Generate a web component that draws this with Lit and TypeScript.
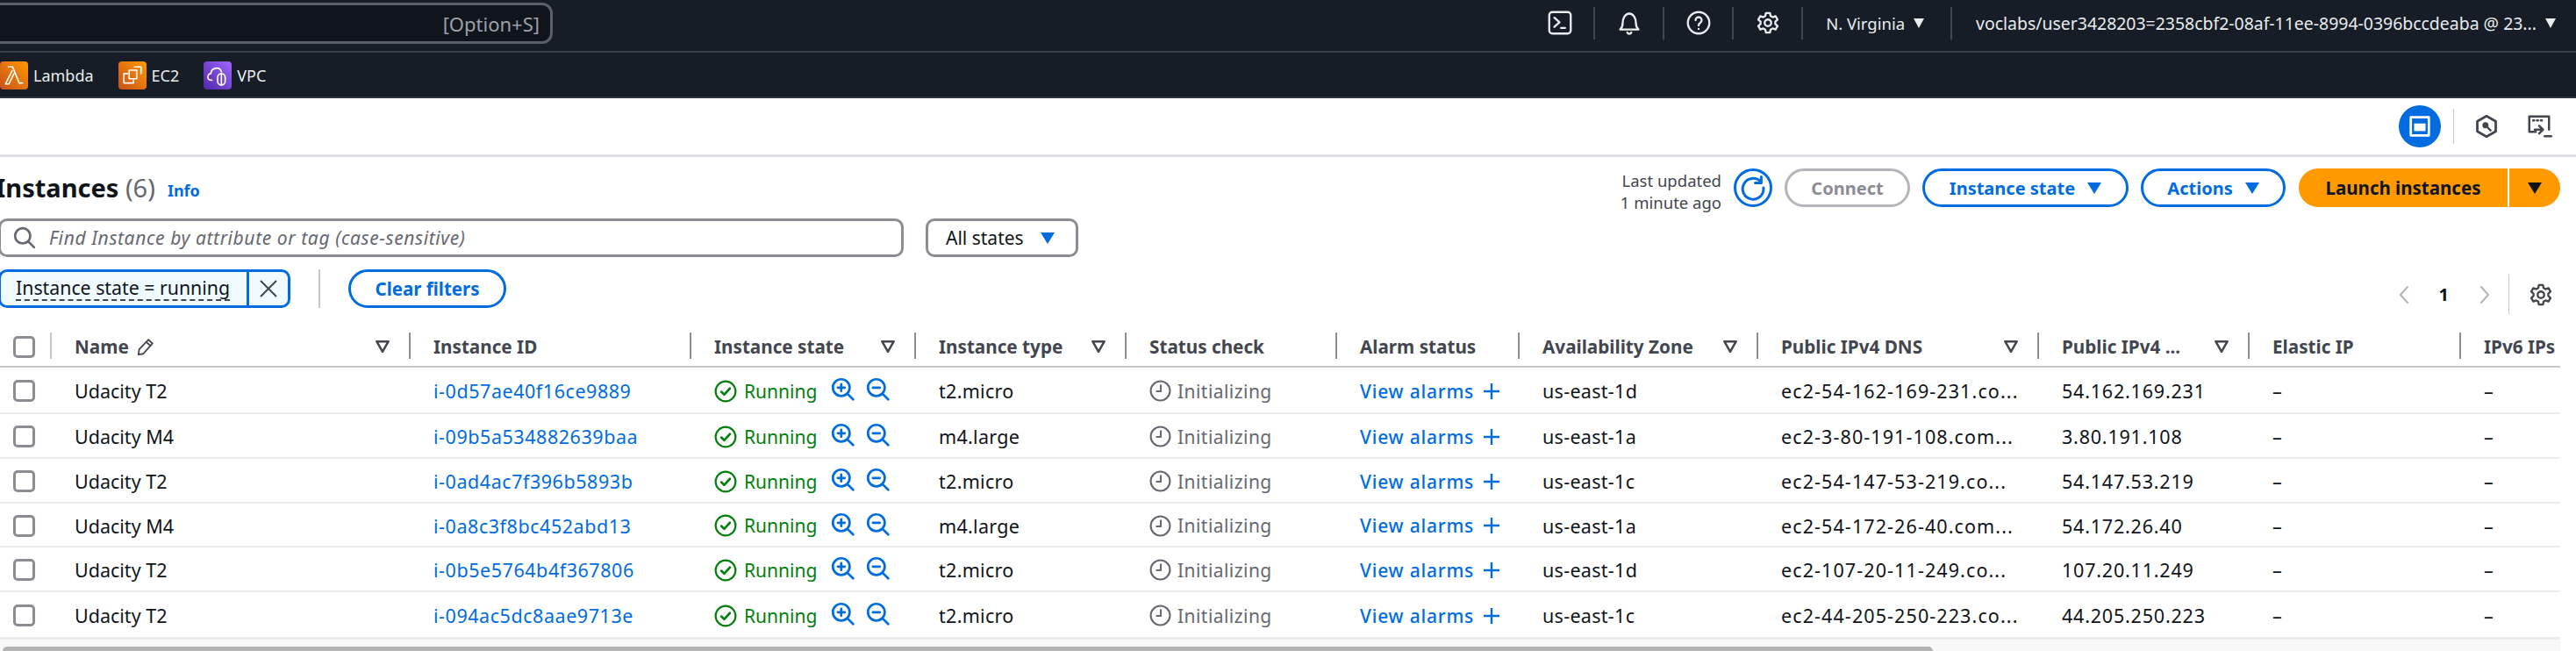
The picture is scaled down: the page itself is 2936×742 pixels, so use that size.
import { LitElement, css, html, svg } from "lit";
import { customElement } from "lit/decorators.js";

type Row = { name: string; id: string; type: string; az: string; dns: string; ip: string };

const rows: Row[] = [
  { name: "Udacity T2", id: "i-0d57ae40f16ce9889", type: "t2.micro", az: "us-east-1d", dns: "ec2-54-162-169-231.co...", ip: "54.162.169.231" },
  { name: "Udacity M4", id: "i-09b5a534882639baa", type: "m4.large", az: "us-east-1a", dns: "ec2-3-80-191-108.com...", ip: "3.80.191.108" },
  { name: "Udacity T2", id: "i-0ad4ac7f396b5893b", type: "t2.micro", az: "us-east-1c", dns: "ec2-54-147-53-219.co...", ip: "54.147.53.219" },
  { name: "Udacity M4", id: "i-0a8c3f8bc452abd13", type: "m4.large", az: "us-east-1a", dns: "ec2-54-172-26-40.com...", ip: "54.172.26.40" },
  { name: "Udacity T2", id: "i-0b5e5764b4f367806", type: "t2.micro", az: "us-east-1d", dns: "ec2-107-20-11-249.co...", ip: "107.20.11.249" },
  { name: "Udacity T2", id: "i-094ac5dc8aae9713e", type: "t2.micro", az: "us-east-1c", dns: "ec2-44-205-250-223.co...", ip: "44.205.250.223" },
];

const columns = [
  { label: "Name", filter: true, edit: true },
  { label: "Instance ID" },
  { label: "Instance state", filter: true },
  { label: "Instance type", filter: true },
  { label: "Status check" },
  { label: "Alarm status" },
  { label: "Availability Zone", filter: true },
  { label: "Public IPv4 DNS", filter: true },
  { label: "Public IPv4 ...", filter: true },
  { label: "Elastic IP" },
  { label: "IPv6 IPs" },
];

const icon = (size: number, body: unknown, box = 24) =>
  html`<svg class="icon" width=${size} height=${size} viewBox="0 0 ${box} ${box}" fill="none" stroke="currentColor" stroke-width="2" stroke-linecap="round" stroke-linejoin="round">${body}</svg>`;

const gearPath = svg`<path d="M10 2.500h4l.6 2.900 2 1.100 2.800-1 2 3.400-2.200 2v2.200l2.200 2-2 3.400-2.800-1-2 1.100-.6 2.900h-4l-.6-2.900-2-1.100-2.800 1-2-3.400 2.200-2v-2.200l-2.200-2 2-3.400 2.800 1 2-1.100z"/><circle cx="12" cy="12" r="3.200"/>`;

const caret = (cls = "") => html`<span class="caret ${cls}"></span>`;

@customElement("app-root")
export class AppRoot extends LitElement {
  static styles = css`
    :host {
      display: block;
      width: 2936px;
      height: 742px;
      overflow: hidden;
      background: #fff;
      font-family: "Noto Sans", "Open Sans", sans-serif;
      font-size: 20px;
      color: #0f141a;
      position: relative;
    }
    * { box-sizing: border-box; }
    .icon { display: block; flex: none; }

    .topbar {
      height: 60px;
      background: #161d26;
      border-bottom: 2px solid #3a4048;
      display: flex;
      align-items: center;
      color: #e9ebed;
    }
    .search {
      width: 650px;
      height: 47px;
      margin-left: -20px;
      margin-top: -5px;
      background: #10141b;
      border: 3px solid #5b5f68;
      border-radius: 12px;
      display: flex;
      align-items: center;
      justify-content: flex-end;
      padding-right: 12px;
      color: #9ba1aa;
      font-size: 22px;
    }
    .top-right {
      margin-left: auto;
      display: flex;
      align-items: center;
      height: 37px;
      margin-top: -6px;
    }
    .top-btn {
      width: 79px;
      height: 37px;
      display: flex;
      align-items: center;
      justify-content: center;
      border-right: 2px solid #414750;
    }
    .region {
      display: flex;
      align-items: center;
      gap: 10px;
      height: 37px;
      padding: 0 30px 0 26px;
      border-right: 2px solid #414750;
      font-size: 18.500px;
      white-space: nowrap;
    }
    .user {
      display: flex;
      align-items: center;
      gap: 10px;
      padding: 0 23px 0 27px;
      font-size: 19.450px;
      white-space: nowrap;
    }
    .top-caret {
      width: 0;
      height: 0;
      border-left: 6px solid transparent;
      border-right: 6px solid transparent;
      border-top: 11px solid #e9ebed;
      flex: none;
    }

    .favbar {
      height: 52px;
      padding-top: 1px;
      background: #161d26;
      border-bottom: 2px solid #2c3038;
      display: flex;
      align-items: center;
      color: #e9ebed;
      font-size: 18px;
      gap: 28px;
    }
    .fav { display: flex; align-items: center; gap: 6px; }
    .tile {
      width: 32px;
      height: 32px;
      border-radius: 4px;
      display: flex;
      align-items: center;
      justify-content: center;
      color: #fff;
    }
    .tile.orange { background: linear-gradient(45deg, #c8511b, #ff9900); }
    .tile.purple { background: linear-gradient(45deg, #4d27a8, #a166ff); }

    .toolbar {
      height: 67px;
      border-bottom: 3px solid #dedee3;
      display: flex;
      align-items: center;
      justify-content: flex-end;
      padding-right: 27px;
      color: #424650;
    }
    .tool-active {
      width: 48px;
      height: 48px;
      border-radius: 50%;
      background: #006ce0;
      display: flex;
      align-items: center;
      justify-content: center;
      color: #fff;
    }
    .tool-sep { width: 1px; height: 40px; background: #c6c6cd; margin: 0 23px 0 14px; }
    .tool-gap { width: 31px; }

    .head {
      height: 44px;
      margin-top: 13px;
      padding-right: 18px;
      display: flex;
      align-items: center;
      margin-left: -5px;
    }
    h1 {
      margin: 0;
      font-size: 29px;
      font-weight: 700;
      line-height: 44px;
      white-space: nowrap;
    }
    h1 span { font-weight: 400; color: #656871; }
    .info { color: #006ce0; font-size: 18px; font-weight: 700; margin-left: 14px; margin-top: 6px; }
    .updated {
      margin-left: auto;
      text-align: right;
      font-size: 18.500px;
      line-height: 25px;
      color: #424650;
      margin-right: 14px;
      margin-top: 8px;
    }
    .head .btn + .btn { margin-left: 14px; }
    .btn {
      height: 44px;
      border: 3px solid #006ce0;
      border-radius: 22px;
      background: #fff;
      color: #006ce0;
      font: 700 20px "Noto Sans", sans-serif;
      display: flex;
      align-items: center;
      justify-content: center;
      gap: 14px;
      white-space: nowrap;
    }
    .btn.round { width: 44px; padding: 0; }
    .btn.off { border-color: #b4b4bb; color: #8c8c94; width: 143px; }
    .btn.state { width: 235px; }
    .btn.actions { width: 165px; }
    .launch { display: flex; margin-left: 15px; gap: 2px; }
    .launch div {
      height: 44px;
      background: #ff9900;
      font-weight: 700;
      display: flex;
      align-items: center;
      justify-content: center;
    }
    .launch .main { width: 238px; border-radius: 22px 0 0 22px; font-size: 20.500px; }
    .launch .more { width: 58px; border-radius: 0 22px 22px 0; }
    .caret {
      width: 0;
      height: 0;
      border-left: 8px solid transparent;
      border-right: 8px solid transparent;
      border-top: 13px solid #006ce0;
      flex: none;
    }
    .caret.dark { border-top-color: #0f141a; }

    .filters { display: flex; height: 44px; margin-top: 13px; gap: 25px; font-size: 21px; }
    .find {
      width: 1032px;
      margin-left: -2px;
      border: 3px solid #8c8c94;
      border-radius: 10px;
      display: flex;
      align-items: center;
      gap: 15px;
      padding-left: 14px;
      color: #656871;
      font-style: italic;
      letter-spacing: 0.6px;
    }
    .select {
      width: 174px;
      border: 3px solid #8c8c94;
      border-radius: 10px;
      display: flex;
      align-items: center;
      justify-content: space-between;
      padding: 0 24px 0 20px;
    }

    .tokens { display: flex; align-items: center; height: 44px; margin-top: 14px; font-size: 21.300px; }
    .token {
      display: flex;
      width: 333px;
      height: 44px;
      margin-left: -2px;
      border: 3px solid #006ce0;
      border-radius: 10px;
      background: #f0fbff;
      overflow: hidden;
    }
    .token-label {
      width: 283px;
      padding-left: 17px;
      display: flex;
      align-items: center;
      border-right: 3px solid #006ce0;
    }
    .token-label span {
      border-bottom: 2px dashed #424650;
      line-height: 26px;
      white-space: nowrap;
    }
    .token-x { flex: 1; display: flex; align-items: center; justify-content: center; color: #424650; }
    .token-sep { width: 2px; height: 44px; background: #c6c6cd; margin: 0 32px; }
    .btn.clear { width: 180px; font-size: 20.500px; }

    .pager {
      position: absolute;
      top: 313px;
      right: 0;
      height: 45px;
      display: flex;
      align-items: center;
      color: #b4b4bb;
    }
    .page-num { color: #0f141a; font-weight: 700; margin: 0 28px 0 27px; }
    .pager-sep { width: 1px; height: 45px; background: #c6c6cd; margin: 0 22px 0 16px; }
    .pager .gear { color: #424650; margin-right: 26px; }

    .table { width: 2918px; margin-top: 22px; }
    .tr {
      display: grid;
      grid-template-columns: 57px 409px 320px 256px 240px 240px 208px 272px 320px 240px 241px 115px;
      align-items: center;
    }
    .tr.header { height: 46px; border-bottom: 2px solid #c6c6cd; color: #424650; font-weight: 700; font-size: 20.700px; }
    .tr.body { height: 51px; padding-top: 2px; border-bottom: 2px solid #ebebf0; font-size: 21.500px; }
    .tr.body.first { height: 53px; }
    .tr.body.short { height: 50px; }
    .tr.body.last { height: 54px; border-bottom-width: 3px; }
    .box {
      width: 25px;
      height: 25px;
      margin-left: 15px;
      border: 3px solid #8c8c94;
      border-radius: 5px;
      background: #fff;
    }
    .th {
      height: 30px;
      padding: 2px 20px 0 26px;
      border-left: 2px solid #8c8c94;
      display: flex;
      align-items: center;
      white-space: nowrap;
      gap: 8px;
      margin-top: -2px;
    }
    .th.plain { border-left-color: #c6c6cd; }
    .sort { margin-left: auto; color: #424650; }
    .td { padding-left: 28px; white-space: nowrap; display: flex; align-items: center; }
    .link { color: #006ce0; letter-spacing: 0.55px; }
    .kind { letter-spacing: 0.3px; }
    .az { letter-spacing: 0.3px; }
    .dns { letter-spacing: 1.100px; }
    .ip { letter-spacing: 0.8px; }
    .running { color: #037f0c; gap: 8px; font-size: 21px; }
    .zoom { color: #006ce0; margin-top: -4px; }
    .zoom.in { margin-left: 8px; }
    .zoom.out { margin-left: 5px; }
    .initial { color: #656871; gap: 7px; font-size: 21px; letter-spacing: 0.45px; }
    .alarms { color: #006ce0; font-weight: 500; gap: 10px; font-size: 21px; letter-spacing: 0.8px; }

    .track {
      height: 13px;
      width: 2918px;
      padding-top: 8px;
      background: #f8f8f8;
    }
    .thumb {
      margin-left: 3px;
      width: 2200px;
      height: 8px;
      background: #b4b4b4;
      border-radius: 5px 5px 0 0;
    }
  `;

  private header() {
    return html`<div class="tr header">
      <div><div class="box"></div></div>
      ${columns.map(
        (c, i) => html`<div class="th ${i === 0 ? "plain" : ""}">
          ${c.label}
          ${c.edit
            ? icon(22, svg`<path d="M15.500 3.500l5 4.500L9 21l-6 1 1-6.500z"/><path d="M13 6.500l5 4.500"/>`)
            : ""}
          ${c.filter
            ? html`<span class="sort">${icon(20, svg`<path d="M4 5h16l-8 14z" stroke-width="3"/>`)}</span>`
            : ""}
        </div>`
      )}
    </div>`;
  }

  private row(r: Row, i: number) {
    const cls = i === 0 ? "first" : i === 3 ? "short" : i === rows.length - 1 ? "last" : "";
    return html`<div class="tr body ${cls}">
      <div><div class="box"></div></div>
      <div class="td">${r.name}</div>
      <div class="td link">${r.id}</div>
      <div class="td running">
        ${icon(26, svg`<circle cx="12" cy="12" r="10.500"/><path d="M7.500 12.500l3 3 6-6.500" stroke-width="2.400"/>`)}
        Running
        <span class="zoom in">${icon(27, svg`<circle cx="10.500" cy="10.500" r="8.500" stroke-width="2.400"/><path d="M17 17l5.500 5.500M7 10.500h7M10.500 7v7" stroke-width="2.400"/>`)}</span>
        <span class="zoom out">${icon(27, svg`<circle cx="10.500" cy="10.500" r="8.500" stroke-width="2.400"/><path d="M17 17l5.500 5.500M7 10.500h7" stroke-width="2.400"/>`)}</span>
      </div>
      <div class="td kind">${r.type}</div>
      <div class="td initial">
        ${icon(25, svg`<circle cx="12" cy="12" r="10.500"/><path d="M12.500 6v6.500H8"/>`)}
        Initializing
      </div>
      <div class="td alarms">
        View alarms ${icon(20, svg`<path d="M10 1v18M1 10h18" stroke-width="2.400" stroke-linecap="butt"/>`, 20)}
      </div>
      <div class="td az">${r.az}</div>
      <div class="td dns">${r.dns}</div>
      <div class="td ip">${r.ip}</div>
      <div class="td">–</div>
      <div class="td">–</div>
    </div>`;
  }

  render() {
    return html`
      <div class="topbar">
        <div class="search">[Option+S]</div>
        <div class="top-right">
          <div class="top-btn">${icon(28, svg`<rect x="1.500" y="1.500" width="21" height="21" rx="3"/><path d="M6.500 7l5 4.500-5 4.500M13 17h4"/>`)}</div>
          <div class="top-btn">${icon(28, svg`<path d="M3 18.500c2-1.500 2.500-3 2.500-6 0-5 2.500-9.500 6.500-9.500s6.500 4.500 6.500 9.500c0 3 .5 4.500 2.500 6z"/><path d="M10 21.500a2.200 2.200 0 0 0 4 0"/>`)}</div>
          <div class="top-btn">${icon(28, svg`<circle cx="12" cy="12" r="10.500"/><path d="M9 9.500a3 3 0 1 1 4.500 2.600c-1 .6-1.500 1.200-1.500 2.400M12 18v.1"/>`)}</div>
          <div class="top-btn">${icon(28, gearPath)}</div>
          <div class="region">N. Virginia <span class="top-caret"></span></div>
          <div class="user">voclabs/user3428203=2358cbf2-08af-11ee-8994-0396bccdeaba @ 23... <span class="top-caret"></span></div>
        </div>
      </div>

      <div class="favbar">
        <div class="fav">
          <div class="tile orange">${icon(26, svg`<path d="M6 3h4.500l7 17H21M12 10L6.500 21H3l7-14" stroke-width="1.500"/>`)}</div>
          Lambda
        </div>
        <div class="fav">
          <div class="tile orange">${icon(26, svg`<rect x="8.500" y="6.500" width="8" height="9" stroke-width="1.500"/><path d="M14 3h7v7M7 10H3v10h10v-3" stroke-width="1.500"/>`)}</div>
          EC2
        </div>
        <div class="fav">
          <div class="tile purple">${icon(26, svg`<path d="M6 17c-6 0-5-7-1-7 0-6 9-8 11-2" stroke-width="1.500"/><rect x="12" y="10" width="8" height="12" rx="4" stroke-width="1.500"/><path d="M16 10v12" stroke-width="1.500"/>`)}</div>
          VPC
        </div>
      </div>

      <div class="toolbar">
        <div class="tool-active">${icon(26, svg`<rect x="2.500" y="2.500" width="19" height="19" stroke-width="2.500"/><rect x="6" y="9" width="12" height="8" fill="currentColor" stroke="none"/>`)}</div>
        <div class="tool-sep"></div>
        ${icon(28, svg`<path d="M12 2l9 5v10l-9 5-9-5V7z" stroke-width="2.400"/><circle cx="11" cy="11" r="2" fill="currentColor"/><path d="M12 12l4 4"/>`)}
        <div class="tool-gap"></div>
        ${icon(30, svg`<path d="M9 17H3V3h18v12"/><path d="M6.500 6.500h1M10 6.500h1M13.500 6.500h1M8 15h7M12 11.500l3.500 3.500-3.500 3.500M17 21h6"/>`)}
      </div>

      <div class="head">
        <h1>Instances <span>(6)</span></h1>
        <div class="info">Info</div>
        <div class="updated">Last updated<br />1 minute ago</div>
        <button class="btn round">${icon(30, svg`<path d="M19 6.500A9.500 9.500 0 1 0 21.500 12" stroke-width="2.400"/><path d="M19.500 2v5.500H14" stroke-width="2.400"/>`)}</button>
        <button class="btn off">Connect</button>
        <button class="btn state">Instance state ${caret()}</button>
        <button class="btn actions">Actions ${caret()}</button>
        <div class="launch">
          <div class="main">Launch instances</div>
          <div class="more">${caret("dark")}</div>
        </div>
      </div>

      <div class="filters">
        <div class="find">
          ${icon(26, svg`<circle cx="10" cy="10" r="8" stroke-width="2.500"/><path d="M16 16l6 6" stroke-width="2.500"/>`)}
          Find Instance by attribute or tag (case-sensitive)
        </div>
        <div class="select">All states ${caret()}</div>
      </div>

      <div class="tokens">
        <div class="token">
          <div class="token-label"><span>Instance state = running</span></div>
          <div class="token-x">${icon(24, svg`<path d="M3 3l18 18M21 3L3 21" stroke-linecap="butt"/>`)}</div>
        </div>
        <div class="token-sep"></div>
        <button class="btn clear">Clear filters</button>
      </div>

      <div class="pager">
        ${icon(24, svg`<path d="M15 3l-8 9 8 9"/>`)}
        <span class="page-num">1</span>
        ${icon(24, svg`<path d="M9 3l8 9-8 9"/>`)}
        <div class="pager-sep"></div>
        <span class="gear">${icon(28, gearPath)}</span>
      </div>

      <div class="table">
        ${this.header()}
        ${rows.map((r, i) => this.row(r, i))}
      </div>
      <div class="track"><div class="thumb"></div></div>
    `;
  }
}
